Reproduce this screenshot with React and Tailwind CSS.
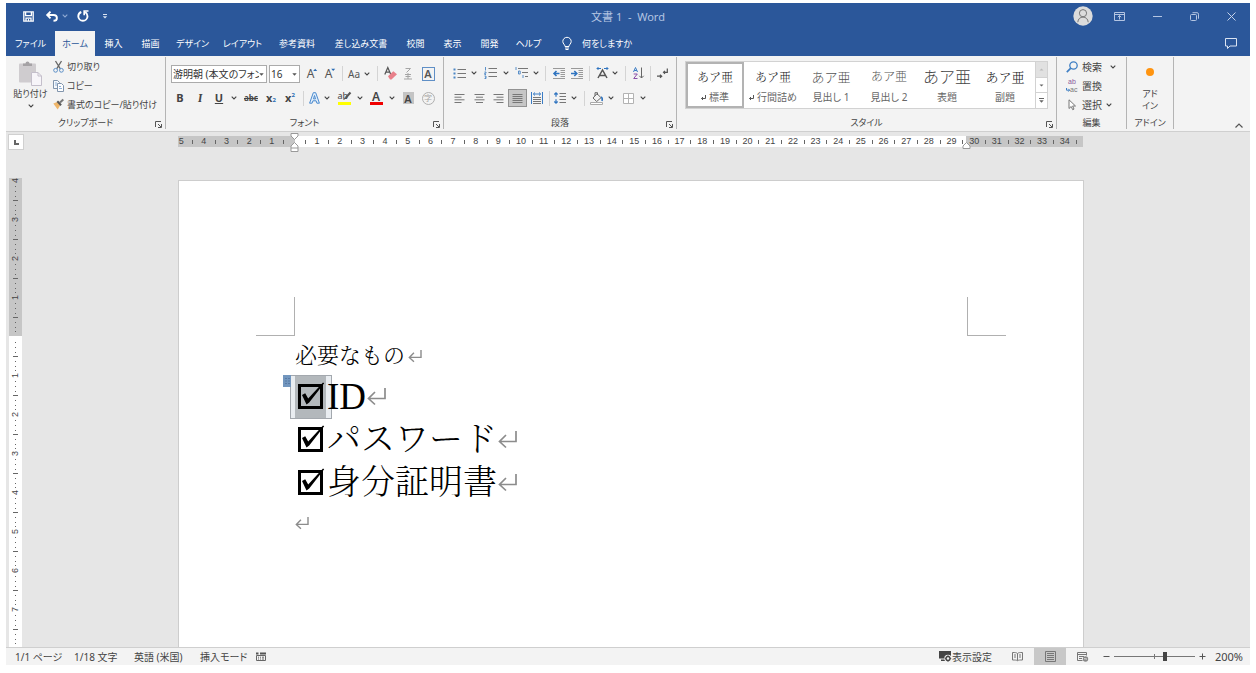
import React from "react";

/* ---------- shared pieces ---------- */

const Svg = ({ w, h, vb, children, className = "" }) => (
  <svg
    width={w}
    height={h}
    viewBox={vb || `0 0 ${w} ${h}`}
    fill="none"
    stroke="#555"
    className={`block shrink-0 overflow-visible ${className}`}
    aria-hidden="true"
  >
    {children}
  </svg>
);

const Chevron = ({ stroke = "#444" }) => (
  <Svg w={6} h={4}>
    <path d="M.7.7 3 3 5.3.7" stroke={stroke} strokeWidth="1.1" />
  </Svg>
);

const Launcher = ({ label }) => (
  <button aria-label={label} className="absolute right-[2px] bottom-0 p-px">
    <Svg w={7} h={7}>
      <path d="M.5 6V.5H6M3 3l3 3M6.5 3v3.5H3" stroke="#555" />
    </Svg>
  </button>
);

const Group = ({ label, width, launcher, children }) => (
  <section
    aria-label={label}
    className={`relative flex h-[72px] shrink-0 flex-col border-r border-[#b4b4b4] ${width}`}
  >
    <div className="h-[63px]">{children}</div>
    <div className="text-center text-[9px] leading-[12px]">{label}</div>
    {launcher && <Launcher label={`${label}の設定`} />}
  </section>
);

const Btn = ({ label, className, children }) => (
  <button
    aria-label={label}
    className={`flex h-[18px] shrink-0 items-center justify-center whitespace-nowrap ${className}`}
  >
    {children}
  </button>
);

const Sep = ({ className }) => (
  <span className={`flex shrink-0 justify-center ${className}`}>
    <span className="h-[15px] w-px bg-[#d4d4d4]" />
  </span>
);

/* ---------- title bar and tabs ---------- */

const TitleBar = () => (
  <header className="grid h-7 grid-cols-[1fr_auto_1fr] items-center">
    <div className="flex items-center pb-[2px] pl-[17px]">
      <button aria-label="上書き保存">
        <Svg w={11} h={11} className="stroke-white">
          <path d="M.8.8h9.4v9.4H.8zM2.6 1v3.7h5.8V1M3 10V7.2h5V10" strokeWidth="1.3" />
          <path d="M5.5 8v2" />
        </Svg>
      </button>
      <button aria-label="元に戻す" className="ml-3">
        <Svg w={12} h={11} className="stroke-white">
          <path d="M1.2 4h6.3c2.200 0 3.400 1.200 3.400 2.900S9.600 9.800 7.500 9.800M4.500.7 1.200 4l3.300 3.300" strokeWidth="1.900" />
        </Svg>
      </button>
      <button aria-label="元に戻す履歴" className="ml-1">
        <Chevron stroke="#8fa9d3" />
      </button>
      <button aria-label="繰り返し" className="ml-[9px]">
        <Svg w={12} h={12} className="stroke-white">
          <path d="M4.300 2C2.500 2.700 1.300 4.300 1.300 6.200a4.600 4.600 0 0 0 9.200 0c0-1.900-.9-3.300-2.300-4.200" strokeWidth="1.900" />
          <path d="M11.500 1H7.200v4.300" strokeWidth="1.700" />
        </Svg>
      </button>
      <button aria-label="クイック アクセス ツール バーのカスタマイズ" className="ml-[13px]">
        <Svg w={6} h={5}>
          <path d="M1 .5h4" stroke="#dbe4f2" />
          <path d="M.8 2.200h4.400L3 4.600z" fill="#dbe4f2" stroke="none" />
        </Svg>
      </button>
    </div>
    <h1 className="whitespace-pre text-[11px] text-[#b4c5e2]">文書 1  -  Word</h1>
    <div className="flex items-center justify-end pr-[14px] pb-[2px]">
      <button aria-label="アカウント" className="mr-[21px]">
        <Svg w={20} h={20}>
          <circle cx="10" cy="10" r="9.700" fill="#dcdcdc" stroke="none" />
          <circle cx="10" cy="7.200" r="3.600" stroke="#777" />
          <path d="M4.800 16.200c.2-3.200 2.400-5.100 5.200-5.100s5 1.900 5.200 5.100" stroke="#777" />
        </Svg>
      </button>
      <button aria-label="リボンの表示オプション" className="mr-7">
        <Svg w={11} h={9}>
          <path d="M.5.5h10v8H.5zM.5 2.500h10M5.500 7.500v-4M3.800 5.200l1.700-1.700 1.700 1.700" stroke="#b4c5e2" />
        </Svg>
      </button>
      <button aria-label="最小化" className="mr-7">
        <Svg w={9} h={9}>
          <path d="M0 4.500h9" stroke="#b4c5e2" />
        </Svg>
      </button>
      <button aria-label="元のサイズに戻す" className="mr-7">
        <Svg w={9} h={9}>
          <rect x=".5" y="2.500" width="6" height="6" rx="1" stroke="#b4c5e2" />
          <path d="M2.500.7H7a1.500 1.500 0 0 1 1.500 1.500v4.500" stroke="#b4c5e2" />
        </Svg>
      </button>
      <button aria-label="閉じる">
        <Svg w={9} h={9}>
          <path d="m.5.5 8 8m0-8-8 8" stroke="#c6d3ea" />
        </Svg>
      </button>
    </div>
  </header>
);

const TABS = [
  ["ファイル", "w-[49px]"],
  ["ホーム", "w-10"],
  ["挿入", "w-[37px]"],
  ["描画", "w-[37px]"],
  ["デザイン", "w-[47px]"],
  ["レイアウト", "w-[53px]"],
  ["参考資料", "w-14"],
  ["差し込み文書", "w-[72px]"],
  ["校閲", "w-[37px]"],
  ["表示", "w-[37px]"],
  ["開発", "w-[37px]"],
  ["ヘルプ", "w-[41px]"],
];

const TabBar = () => (
  <nav className="flex h-[25px] items-stretch text-[9px] text-white">
    {TABS.map(([name, w]) => (
      <button
        key={name}
        className={`${w} shrink-0 whitespace-nowrap ${name === "ホーム" ? "bg-[#f3f3f3] text-[#2b579a]" : ""}`}
      >
        {name}
      </button>
    ))}
    <button className="ml-[13px] flex items-center gap-[10px] whitespace-nowrap">
      <Svg w={10} h={13}>
        <path d="M3 9.500C3 7.500.8 6.800.8 4.500a4.200 4.200 0 0 1 8.400 0C9.200 6.800 7 7.500 7 9.500zM3 11h4M3.500 12.500h3" stroke="#fff" />
      </Svg>
      何をしますか
    </button>
    <button aria-label="コメント" className="mr-[13px] ml-auto">
      <Svg w={12} h={11}>
        <path d="M.5.5h11v7.500H5L2.500 10.500V8h-2z" stroke="#dbe4f2" />
      </Svg>
    </button>
  </nav>
);

/* ---------- ribbon groups ---------- */

const ClipboardGroup = () => (
  <Group label="クリップボード" width="w-40" launcher>
    <div className="flex text-[9px]">
      <button className="flex w-[47px] flex-col items-center pt-[4px] pl-[2px]">
        <Svg w={23} h={25}>
          <rect x="0" y="2.500" width="17" height="19" rx="1" fill="#cfcccf" stroke="none" />
          <path d="M4 5V2.500h2.500a2 2 0 0 1 4 0H13V5z" fill="#a5a2a5" stroke="none" />
          <path d="M12.500 11.500h6.500l3.500 3.500v9.500h-10z" fill="#f7f5f9" stroke="#c4bfcb" />
          <path d="M19 11.500V15h3.500" stroke="#c4bfcb" />
        </Svg>
        <span className="mt-[1px] leading-[14px] whitespace-nowrap">貼り付け</span>
        <span className="pt-[3px]"><Chevron /></span>
      </button>
      <div className="flex flex-col">
        <button className="flex h-[19px] items-center gap-[3px]">
          <Svg w={11} h={12}>
            <path d="m2.500 0 4.700 7.700M8.500 0 3.800 7.700" stroke="#666" strokeWidth="1.300" />
            <circle cx="2.600" cy="9.300" r="1.900" stroke="#5b8fc7" />
            <circle cx="8.400" cy="9.300" r="1.900" stroke="#5b8fc7" />
          </Svg>
          切り取り
        </button>
        <button className="flex h-[19px] items-center gap-[3px]">
          <Svg w={11} h={12}>
            <path d="M.5.500h4l2 2v6h-6z" fill="#f6f9fc" stroke="#8195ad" />
            <path d="M4.500 3.500h4l2 2v6h-6z" fill="#fff" stroke="#8195ad" />
            <path d="M6 6.500h2M6 8.500h3M2 3h2M2 5h2" stroke="#8fb0d6" />
          </Svg>
          コピー
        </button>
        <button className="flex h-[19px] items-center gap-[3px] whitespace-nowrap">
          <Svg w={11} h={11}>
            <path d="M.3 4.500 4.200 3l3 3.300-2.500 4.200z" fill="#efb66a" stroke="none" />
            <path d="m4.300 2.300 3.800 3.900" stroke="#555" strokeWidth="2" />
            <path d="m7 3.500 3.300-3" stroke="#777" strokeWidth="2" />
          </Svg>
          書式のコピー/貼り付け
        </button>
      </div>
    </div>
  </Group>
);

const Combo = ({ label, value, className }) => (
  <span className={`relative flex shrink-0 ${className}`}>
    <select
      aria-label={label}
      defaultValue={value}
      className="h-[18px] w-full appearance-none overflow-hidden border border-[#ababab] bg-white pr-[7px] pl-px text-[10px] leading-[14px] text-[#333]"
    >
      <option>{value}</option>
    </select>
    <Svg w={5} h={3} className="pointer-events-none absolute top-[8px] right-[3px]">
      <path d="M.3.300h4.400L2.500 2.800z" fill="#555" stroke="none" />
    </Svg>
  </span>
);

const FontGroup = () => (
  <Group label="フォント" width="w-[278px]" launcher>
    <div className="flex h-8 items-center pt-[1px] pl-[5px] text-[#555]">
      <Combo label="フォント" value="游明朝 (本文のフォン" className="w-[96px]" />
      <Combo label="フォント サイズ" value="16" className="ml-[2px] w-[31px]" />
      <Btn label="フォント サイズの拡大" className="w-6 text-[12px]">
        A<Svg w={3} h={12}><path d="M-.8 3 1.200.8 3.200 3z" fill="#2b6cb5" stroke="none" /></Svg>
      </Btn>
      <Btn label="フォント サイズの縮小" className="w-3 text-[12px]">
        A<Svg w={3} h={12}><path d="M-.8.800h4L1.200 3z" fill="#2b6cb5" stroke="none" /></Svg>
      </Btn>
      <Sep className="w-3" />
      <Btn label="文字種の変換" className="w-[22px] gap-1 text-[10px]">Aa<Chevron /></Btn>
      <Sep className="w-[14px]" />
      <Btn label="すべての書式をクリア" className="w-3">
        <Svg w={13} h={13}>
          <path d="M.8 7.500 3.800.5l3 7M1.800 5.200h4" strokeWidth="1.200" />
          <path d="m4 9.300 5.300-5 3.700 3-5.500 5.200H6z" fill="#e8808a" stroke="none" />
        </Svg>
      </Btn>
      <Btn label="ルビ" className="w-6">
        <Svg w={8} h={12}>
          <path d="M1.500.500h5l-4 4M1 6.500h6M4 5v6M1.500 8.500h5M0 11h8" stroke="#a5a5a5" />
        </Svg>
      </Btn>
      <Btn label="囲み線" className="w-4">
        <span className="grid h-[14px] w-[13px] place-items-center border border-[#5f8fc6] text-[11px] leading-none font-semibold">A</span>
      </Btn>
    </div>
    <div className="flex h-[18px] items-center pl-[5px] text-[#444]">
      <Btn className="w-[18px] text-[11px] font-bold">B</Btn>
      <Btn className="w-[22px] font-serif text-[12px] font-bold italic">I</Btn>
      <Btn className="w-4 text-[11px] font-bold underline">U</Btn>
      <Btn label="下線の種類" className="w-[14px]"><Chevron /></Btn>
      <Btn label="取り消し線" className="w-5 text-[8px] font-bold line-through">abc</Btn>
      <Btn label="下付き" className="w-5 text-[11px] font-bold">x<sub className="text-[6px] text-[#2b6cb5]">2</sub></Btn>
      <Btn label="上付き" className="w-[18px] text-[11px] font-bold">x<sup className="text-[6px] text-[#2b6cb5]">2</sup></Btn>
      <Sep className="w-2" />
      <Btn label="文字の効果と体裁" className="w-[14px]">
        <Svg w={11} h={12}>
          <path d="M4.300.700h2.400l3.700 10.500H7.900l-.8-2.400H3.900l-.8 2.400H.6zM5.500 3.500 4.500 6.900h2z" fill="#e4effa" stroke="#4a8bd0" />
        </Svg>
      </Btn>
      <Btn label="文字の効果の種類" className="w-3"><Chevron /></Btn>
      <Btn label="蛍光ペンの色" className="w-[22px]">
        <span className="relative flex h-[14px] w-[13px] items-start border-b-[3px] border-[#ffff00] text-[9px] leading-[9px]">
          ab
          <Svg w={8} h={8} className="absolute top-[1px] left-[5px]">
            <path d="M7.500.500 2.500 6" strokeWidth="2" />
            <path d="M2.500 6 .5 8" />
          </Svg>
        </span>
      </Btn>
      <Btn label="蛍光ペンの種類" className="w-[10px]"><Chevron /></Btn>
      <Btn label="フォントの色" className="w-[22px]">
        <span className="grid h-[14px] w-[13px] place-items-center border-b-[3px] border-[#f00000] text-[12px] leading-[10px] font-semibold">A</span>
      </Btn>
      <Btn label="フォントの色の種類" className="w-[10px]"><Chevron /></Btn>
      <Btn label="文字の網かけ" className="w-[22px]">
        <span className="grid h-[12px] w-[11px] place-items-center bg-[#c4c4c4] text-[11px] leading-none font-semibold">A</span>
      </Btn>
      <Btn label="囲い文字" className="w-[18px]">
        <span className="grid h-[13px] w-[13px] place-items-center rounded-full border border-[#b0b0b0] text-[8px] leading-none text-[#a5a5a5]">字</span>
      </Btn>
    </div>
  </Group>
);

const Lines = ({ rows, stroke = "#777" }) => (
  <Svg w={11} h={9}>
    <path d={rows} stroke={stroke} />
  </Svg>
);

const ParagraphGroup = () => (
  <Group label="段落" width="w-[233px]" launcher>
    <div className="flex h-8 items-center pl-1">
      <Btn label="箇条書き" className="w-[22px]">
        <Svg w={13} h={11}>
          <path d="M4.500 1.500H13M4.500 5.500H13M4.500 9.500H13" stroke="#777" />
          <path d="M.5 1.500h2M.5 5.500h2M.5 9.500h2" stroke="#4a86c5" strokeWidth="2" />
        </Svg>
      </Btn>
      <Btn label="行頭文字" className="w-2"><Chevron /></Btn>
      <Btn label="段落番号" className="w-6">
        <Svg w={13} h={12}>
          <path d="M4.500 1.500H13M4.500 5.500H13M4.500 9.500H13" stroke="#777" />
          <path d="M1.500 0v3.500M.5 5h1.500v1.200H.7v1.300H2M.5 9h1.500v2.500H.5M1 10.200h1" stroke="#4a86c5" strokeWidth=".9" />
        </Svg>
      </Btn>
      <Btn label="番号ライブラリ" className="w-2"><Chevron /></Btn>
      <Btn label="アウトライン" className="w-[22px]">
        <Svg w={13} h={12}>
          <path d="M3 1.500h10M7 5.500h6M10 9.500h3" stroke="#777" />
          <path d="M1 0v3M3.500 4h1.700v3H3.500zM8 8v3" stroke="#4a86c5" strokeWidth=".9" />
        </Svg>
      </Btn>
      <Btn label="リスト ライブラリ" className="w-2"><Chevron /></Btn>
      <Sep className="w-[10px]" />
      <Btn label="インデントを減らす" className="w-[18px]">
        <Svg w={12} h={11}>
          <path d="M0 .500h12M7.500 2.500H12M7.500 4.500H12M7.500 6.500H12M7.500 8.500H12M0 10.500h12" stroke="#999" />
          <path d="M6.500 5.500h-5M3.500 3 1 5.500 3.500 8" stroke="#2f74c0" strokeWidth="1.600" />
        </Svg>
      </Btn>
      <Btn label="インデントを増やす" className="w-[18px]">
        <Svg w={12} h={11}>
          <path d="M0 .500h12M7.500 2.500H12M7.500 4.500H12M7.500 6.500H12M7.500 8.500H12M0 10.500h12" stroke="#999" />
          <path d="M0 5.500h5M3.300 3l2.500 2.500L3.300 8" stroke="#2f74c0" strokeWidth="1.600" />
        </Svg>
      </Btn>
      <Sep className="w-[6px]" />
      <Btn label="拡張書式" className="w-5">
        <Svg w={13} h={12}>
          <path d="m2 11 4.500-8L11 11M3.500 8.500h6" strokeWidth="1.500" />
          <path d="M5 1.500H1M2.500 0 1 1.500 2.500 3M8 1.500h4M10.500 0 12 1.500 10.500 3" stroke="#2f74c0" />
        </Svg>
      </Btn>
      <Btn label="拡張書式の種類" className="w-[6px]"><Chevron /></Btn>
      <Sep className="w-[14px]" />
      <Btn label="並べ替え" className="w-3">
        <Svg w={11} h={12}>
          <path d="m.5 5 2-4.500 2 4.500M1.200 3.500h2.600" stroke="#3a7cc4" />
          <path d="M.7 7h3.600l-3.600 4.500h3.800" stroke="#8a4fa8" />
          <path d="M8.500.500V11M6.300 8.800 8.500 11l2.200-2.200" stroke="#666" />
        </Svg>
      </Btn>
      <Sep className="w-3" />
      <Btn label="編集記号の表示" className="w-3">
        <Svg w={11} h={11}>
          <path d="M10.300.500v3.800H6.500M8 2.800 6.500 4.300 8 5.800M0 8.200h4.500M3 6.700l1.700 1.500L3 9.700" strokeWidth="1.200" />
        </Svg>
      </Btn>
    </div>
    <div className="flex h-[18px] items-center pl-1">
      <Btn label="左揃え" className="w-[22px]"><Lines rows="M.5.500h10M.5 3.200h7M.5 5.800h10M.5 8.500h7" /></Btn>
      <Btn label="中央揃え" className="w-[18px]"><Lines rows="M.5.500h10M2 3.200h7M.5 5.800h10M2 8.500h7" /></Btn>
      <Btn label="右揃え" className="w-5"><Lines rows="M.5.500h10M3.500 3.200h7M.5 5.800h10M3.500 8.500h7" /></Btn>
      <Btn label="両端揃え" className="w-[19px] border border-[#929292] bg-[#c6c6c6]">
        <Lines rows="M.5.500h10M.5 2.500h10M.5 4.500h10M.5 6.500h10M.5 8.500h10" />
      </Btn>
      <Btn label="均等割り付け" className="w-5">
        <Svg w={12} h={12}>
          <path d="M.5 0v12M11.500 0v12M2.500 2h7M4 .5 2.300 2 4 3.500M8 .5 9.700 2 8 3.500" stroke="#3a7cc4" />
          <path d="M2 5.500h8M2 7.500h8M2 9.500h8M2 11.500h8" stroke="#777" />
        </Svg>
      </Btn>
      <Sep className="w-1" />
      <Btn label="行と段落の間隔" className="w-[18px]">
        <Svg w={12} h={12}>
          <path d="M5.500 1.500H12M5.500 4.500H12M5.500 7.500H12M5.500 10.500H12" stroke="#777" />
          <path d="M2 .8v4M.3 2.500 2 .8l1.700 1.700M2 7.200v4M.3 9.500 2 11.200l1.700-1.700" stroke="#2f74c0" strokeWidth="1.200" />
        </Svg>
      </Btn>
      <Btn label="間隔の種類" className="w-[10px]"><Chevron /></Btn>
      <Sep className="w-[10px]" />
      <Btn label="塗りつぶし" className="w-4">
        <Svg w={14} h={13}>
          <path d="m3 6 4-4.300 4 4-4.300 3.800zM5 4V.700h2.500V3" stroke="#666" />
          <path d="M11 5c1.500.5 1.500 2 1 4" stroke="#2f74c0" strokeWidth="1.600" />
          <path d="M.5 10.500h12v2H.5z" fill="#fff" stroke="#aaa" />
        </Svg>
      </Btn>
      <Btn label="塗りつぶしの色" className="w-3"><Chevron /></Btn>
      <Btn label="罫線" className="w-[22px]">
        <Svg w={11} h={11}>
          <path d="M.5.500h10v10H.5zM5.500.500v10M.5 5.500h10" fill="#fff" stroke="#b3b3b3" />
        </Svg>
      </Btn>
      <Btn label="罫線の種類" className="w-2"><Chevron /></Btn>
    </div>
  </Group>
);

const STYLES = [
  ["標準", "font-['Noto_Serif_CJK_JP',serif] text-[12px] text-[#222]", true],
  ["行間詰め", "font-['Noto_Serif_CJK_JP',serif] text-[12px] text-[#222]", true],
  ["見出し 1", "text-[13px] text-[#555]", false],
  ["見出し 2", "text-[12px] text-[#555]", false],
  ["表題", "text-[16px] text-[#444]", false],
  ["副題", "font-['Noto_Serif_CJK_JP',serif] text-[13px] text-[#222]", false],
];

const StylesGroup = () => (
  <Group label="スタイル" width="w-[380px]" launcher>
    <div className="mt-[4px] ml-2 flex h-[48px] w-[363px] border border-[#d2d2d2] bg-white">
      {STYLES.map(([name, sample, mark], i) => (
        <button
          key={name}
          className={`flex w-[58px] shrink-0 flex-col items-center whitespace-nowrap text-[#666] ${
            i === 0 ? "border-2 border-[#b3b3b3]" : "border-2 border-transparent"
          }`}
        >
          <span className={`flex h-[26px] items-center font-light [font-feature-settings:normal] ${sample}`}>あア亜</span>
          <span className="flex items-center gap-[3px] leading-[14px]">
            {mark && (
              <Svg w={5} h={5}>
                <path d="M4.500 0v3.500h-4M2 2 .5 3.500 2 5" stroke="#555" />
              </Svg>
            )}
            {name}
          </span>
        </button>
      ))}
      <div className="ml-auto flex w-[12px] flex-col border-l border-[#d2d2d2]">
        <button aria-label="前の行" className="grid flex-1 place-items-center bg-[#e1e1e1]">
          <Svg w={5} h={3}><path d="M.5 2.500h4L2.500.500z" fill="#bbb" stroke="none" /></Svg>
        </button>
        <button aria-label="次の行" className="grid flex-1 place-items-center border-y border-[#d2d2d2]">
          <Svg w={5} h={3}><path d="M.5.500h4l-2 2z" fill="#666" stroke="none" /></Svg>
        </button>
        <button aria-label="その他のスタイル" className="grid flex-1 place-items-center">
          <Svg w={5} h={5}>
            <path d="M0 .500h5" stroke="#666" />
            <path d="M.3 2.300h4.400L2.500 4.800z" fill="#666" stroke="none" />
          </Svg>
        </button>
      </div>
    </div>
  </Group>
);

const EditGroup = () => (
  <Group label="編集" width="w-[70px]">
    <div className="flex flex-col pl-[9px]">
      <button className="flex h-[19px] items-center gap-1">
        <Svg w={12} h={12}>
          <circle cx="7.500" cy="4.500" r="3.700" stroke="#3f7fc4" strokeWidth="1.300" />
          <path d="M4.800 7.200.8 11.200" stroke="#3f7fc4" strokeWidth="1.700" />
        </Svg>
        検索
        <span className="pl-1"><Chevron /></span>
      </button>
      <button className="flex h-[19px] items-center gap-1">
        <span className="flex w-3 flex-col font-['Liberation_Sans',sans-serif] text-[7px] leading-[8px] text-[#8a5a9c]">
          <span>ab</span>
          <span className="flex items-center">
            <Svg w={4} h={4}><path d="M.5 0v2.200h3M2.300.8l1.400 1.400-1.400 1.400" stroke="#3f7fc4" /></Svg>
            <span className="text-[#777]">ac</span>
          </span>
        </span>
        置換
      </button>
      <button className="flex h-[19px] items-center gap-1">
        <span className="flex w-3 justify-center">
          <Svg w={8} h={11}>
            <path d="M1 .800v8.700l2.200-2 1.500 3.200 1.300-.600L4.600 7h2.900z" fill="#fff" stroke="#777" />
          </Svg>
        </span>
        選択
        <Chevron />
      </button>
    </div>
  </Group>
);

const AddinGroup = () => (
  <Group label="アドイン" width="w-[47px]">
    <button className="flex w-full flex-col items-center pt-[11px] text-[9px] leading-3">
      <span className="mb-3 size-2 rounded-full bg-[#ff9410]" />
      アド
      <br />
      イン
    </button>
  </Group>
);

const Ribbon = () => (
  <div className="flex h-[76px] border-b border-[#cfcfcf] bg-[#f3f3f3] pt-[1px] text-[#444]">
    <ClipboardGroup />
    <FontGroup />
    <ParagraphGroup />
    <StylesGroup />
    <EditGroup />
    <AddinGroup />
    <button aria-label="リボンを折りたたむ" className="mt-auto mr-[7px] mb-[3px] ml-auto">
      <Svg w={8} h={5}>
        <path d="m.5 4.500 3.500-3.500 3.500 3.500" stroke="#555" strokeWidth="1.200" />
      </Svg>
    </button>
  </div>
);

/* ---------- rulers ---------- */

const H_MARKS = Array.from({ length: 40 }, (_, i) => Math.abs(i - 5));

const HorizontalRuler = () => (
  <div className="mx-auto mt-1 w-[905px] shrink-0">
    <div className="relative flex h-[11px] items-center bg-[linear-gradient(to_right,#c6c6c6_117px,#fff_117px,#fff_788px,#c6c6c6_788px)] pr-px font-[Liberation_Sans] text-[9px] leading-none text-[#444]">
      <div className="-ml-[2px] flex flex-1 items-center">
        {H_MARKS.map((n, i) => (
          <React.Fragment key={i}>
            <span className="flex w-0 flex-1 justify-center">{n || ""}</span>
            <span className="flex w-0 flex-1 justify-center">
              <span className="h-1 w-px bg-[#666]" />
            </span>
          </React.Fragment>
        ))}
      </div>
      <Svg w={9} h={20} className="absolute -top-[3px] left-[112px]">
        <path d="M1 .500h7v2.500L4.500 6.500 1 3z" fill="#fff" stroke="#999" />
        <path d="M1 18.500h7v-5.500L4.500 9.500 1 13zM1 15h7" fill="#fff" stroke="#999" />
      </Svg>
      <Svg w={9} h={8} className="absolute top-[6px] left-[784px]">
        <path d="M1 6.500h7V4L4.500.500 1 4z" fill="#fff" stroke="#999" />
      </Svg>
    </div>
  </div>
);

const V_MARKS = [4, 3, 2, 1, 0, 1, 2, 3, 4, 5, 6, 7];

const VerticalRuler = () => (
  <div className="mt-[28px] ml-[3px] w-[13px] shrink-0 overflow-hidden bg-[linear-gradient(to_bottom,#c6c6c6_158px,#fff_158px)] font-[Liberation_Sans] text-[9px] leading-none text-[#444]">
    {V_MARKS.map((n, i) => (
      <div key={i} className="flex h-[39px] flex-col items-center">
        <span className="flex h-[5px] rotate-180 items-center [writing-mode:vertical-rl]">{n || ""}</span>
        <Svg w={5} h={34}>
          <path d="M2 3.500h1M2 8.500h1M2 13.500h1M0 17.500h5M2 22.500h1M2 27.500h1M2 31.500h1" stroke="#666" />
        </Svg>
      </div>
    ))}
  </div>
);

/* ---------- document ---------- */

const Return = ({ small }) => (
  <Svg w={small ? 14 : 19} h={small ? 12 : 17} vb="0 0 19 17" className={small ? "ml-[3px]" : "ml-px"}>
    <path d="M18 0v10.500H1.500M8 4 1.500 10.500 8 16.500" stroke="#8c8c8c" strokeWidth={small ? 2 : 1.7} />
  </Svg>
);

const CheckBox = ({ label }) => (
  <span className="relative block size-[25px]">
    <input
      type="checkbox"
      defaultChecked
      aria-label={label}
      className="peer block size-[25px] appearance-none border-3 border-black"
    />
    <Svg w={25} h={25} className="pointer-events-none absolute inset-0 hidden peer-checked:block">
      <path d="M4 11 7.200 9.200 10.200 14.500 25-1.500l1.200.7L11.200 18.500 8.500 20.500z" fill="#000" stroke="none" />
    </Svg>
  </span>
);

const Item = ({ text, latin, selected }) => (
  <div className="relative flex h-[43px] items-center">
    {selected && (
      <>
        <span className="absolute top-0 -left-[5px] h-[44px] w-[42px] border border-[#a3a8ae] bg-[#e9edf1] px-[4px]">
          <span className="block h-full w-[31px] bg-[#b3b8bc]" />
        </span>
        <span className="absolute top-0 -left-[12px] grid h-[12px] w-[8px] place-items-center bg-[#7296be]">
          <Svg w={5} h={8}>
            <path d="M.5 1.500h1M3.500 1.500h1M.5 4h1M3.500 4h1M.5 6.500h1M3.500 6.500h1" stroke="#3e5f8a" />
          </Svg>
        </span>
      </>
    )}
    <span className="ml-[3px]"><CheckBox label={text} /></span>
    <span className={`relative ml-1 leading-[43px] ${latin ? "text-[37px]" : "text-[34px]"}`}>{text}</span>
    <Return />
  </div>
);

const Page = () => (
  <article className="mx-auto h-full w-[906px] shrink-0 border border-b-0 border-[#cdcdcd] bg-white px-[77px] pt-[116px] text-black">
    <div className="flex justify-between">
      <span className="size-[39px] border-r border-b border-[#b0b0b0]" />
      <span className="size-[39px] border-b border-l border-[#b0b0b0]" />
    </div>
    <div className="px-[39px] font-['Liberation_Serif','Noto_Serif_CJK_JP','Noto_Sans_CJK_JP',serif] font-light whitespace-nowrap [font-feature-settings:normal]">
      <p className="flex h-[39px] items-center text-[22px]">必要なもの<Return small /></p>
      <Item text="ID" latin selected />
      <Item text="パスワード" />
      <Item text="身分証明書" />
      <p className="-ml-[3px] flex h-[38px] items-center"><Return small /></p>
    </div>
  </article>
);

/* ---------- status bar ---------- */

const StatusBar = () => (
  <footer className="flex h-[18px] shrink-0 items-center border-t border-[#cfcfcf] bg-[#f3f3f3] pl-[9px] whitespace-nowrap text-[#444]">
    <button className="w-[59px] text-left">1/1 ページ</button>
    <button className="w-[60px] text-left">1/18 文字</button>
    <button className="w-[66px] text-left">英語 (米国)</button>
    <button className="w-[56px] text-left">挿入モード</button>
    <button aria-label="マクロの記録">
      <Svg w={10} h={9}>
        <path d="M.5 3.500h9v5h-9z" stroke="#666" />
        <path d="M0 1.500h2.500M4 1.500h6" stroke="#555" strokeWidth="2" />
        <path d="M2 5.200h1M4 5.200h1M6 5.200h2M2 7h1M4 7h1M6 7h2" stroke="#666" />
      </Svg>
    </button>
    <button className="ml-auto flex items-center">
      <Svg w={13} h={11}>
        <path d="M0 0h12v7.500H0zM2 8.500h4v1.500H2z" fill="#444" stroke="none" />
        <circle cx="9" cy="7.500" r="3.700" fill="#f3f3f3" stroke="none" />
        <circle cx="9" cy="7.500" r="2" stroke="#444" strokeWidth="1.400" />
        <path d="M9 4.300v1M9 9.700v1M5.800 7.500h1M11.200 7.500h1" stroke="#444" />
      </Svg>
      表示設定
    </button>
    <button aria-label="閲覧モード" className="ml-[20px]">
      <Svg w={11} h={9}>
        <path d="M5.500 1.500v7M5.500 1.500C4.500.500 3 .500.500.500v7.500c2.500 0 4 0 5 .7 1-.7 2.500-.7 5-.7V.500c-2.500 0-4 0-5 1zM2 3h2M2 5h2M7 3h2M7 5h2" stroke="#777" />
      </Svg>
    </button>
    <button aria-label="印刷レイアウト" className="ml-[11px] grid h-[17px] w-8 place-items-center bg-[#c8c8c8]">
      <Svg w={11} h={11}>
        <path d="M.5.500h10v10H.5zM2 2.500h7M2 4.500h7M2 6.500h7M2 8.500h7" stroke="#777" />
      </Svg>
    </button>
    <button aria-label="Web レイアウト" className="ml-[11px]">
      <Svg w={12} h={10}>
        <path d="M5.500 8.500h-5v-8h9v3M.5 2.500h9M2 4.500h5M2 6.500h3" stroke="#777" />
        <circle cx="8.500" cy="7" r="2.700" fill="#888" stroke="none" />
        <path d="M7 6.500c1 1 2-.5 3 1" stroke="#eee" />
      </Svg>
    </button>
    <button aria-label="縮小" className="ml-[14px]">
      <Svg w={7} h={7}><path d="M.5 3.500h6" stroke="#555" /></Svg>
    </button>
    <span className="relative ml-1 flex h-[11px] w-[81px] items-center">
      <span className="absolute top-[3px] left-10 h-[5px] w-px bg-[#777]" />
      <input
        type="range"
        min="0"
        max="100"
        defaultValue="63"
        aria-label="ズーム"
        aria-valuetext="200%"
        className="relative h-[9px] w-full appearance-none bg-transparent [&::-webkit-slider-runnable-track]:h-px [&::-webkit-slider-runnable-track]:bg-[#777] [&::-webkit-slider-thumb]:-mt-1 [&::-webkit-slider-thumb]:h-[9px] [&::-webkit-slider-thumb]:w-1 [&::-webkit-slider-thumb]:appearance-none [&::-webkit-slider-thumb]:bg-[#444]"
      />
    </span>
    <button aria-label="拡大" className="ml-1">
      <Svg w={7} h={7}><path d="M.5 3.500h6M3.500.500v6" stroke="#555" /></Svg>
    </button>
    <button className="mr-[7px] ml-2 w-[29px] text-right text-[11px]">200%</button>
  </footer>
);

export default function App() {
  return (
    <div className="flex h-screen flex-col overflow-hidden bg-white px-[6px] pt-[3px] pb-2 font-['Noto_Sans','Noto_Sans_CJK_JP',sans-serif] text-[10px] leading-[14px] [font-feature-settings:'palt']">
      <div className="shrink-0 bg-[#2b579a]">
        <TitleBar />
        <TabBar />
        <Ribbon />
      </div>
      <main className="flex min-h-0 flex-1 flex-col bg-[#e6e6e6]">
        <div className="flex h-[18px] shrink-0">
          <button aria-label="タブの種類" className="mt-[2px] ml-[2px] grid size-4 shrink-0 place-items-center border border-[#d0d0d0] bg-white">
            <Svg w={5} h={5}><path d="M1 0v4h4" strokeWidth="2" stroke="#666" /></Svg>
          </button>
          <div className="flex flex-1 pr-[14px]">
            <HorizontalRuler />
          </div>
        </div>
        <div className="flex min-h-0 flex-1">
          <VerticalRuler />
          <div className="min-w-0 flex-1 overflow-hidden pt-[30px] pr-[10px]">
            <Page />
          </div>
        </div>
      </main>
      <StatusBar />
    </div>
  );
}
